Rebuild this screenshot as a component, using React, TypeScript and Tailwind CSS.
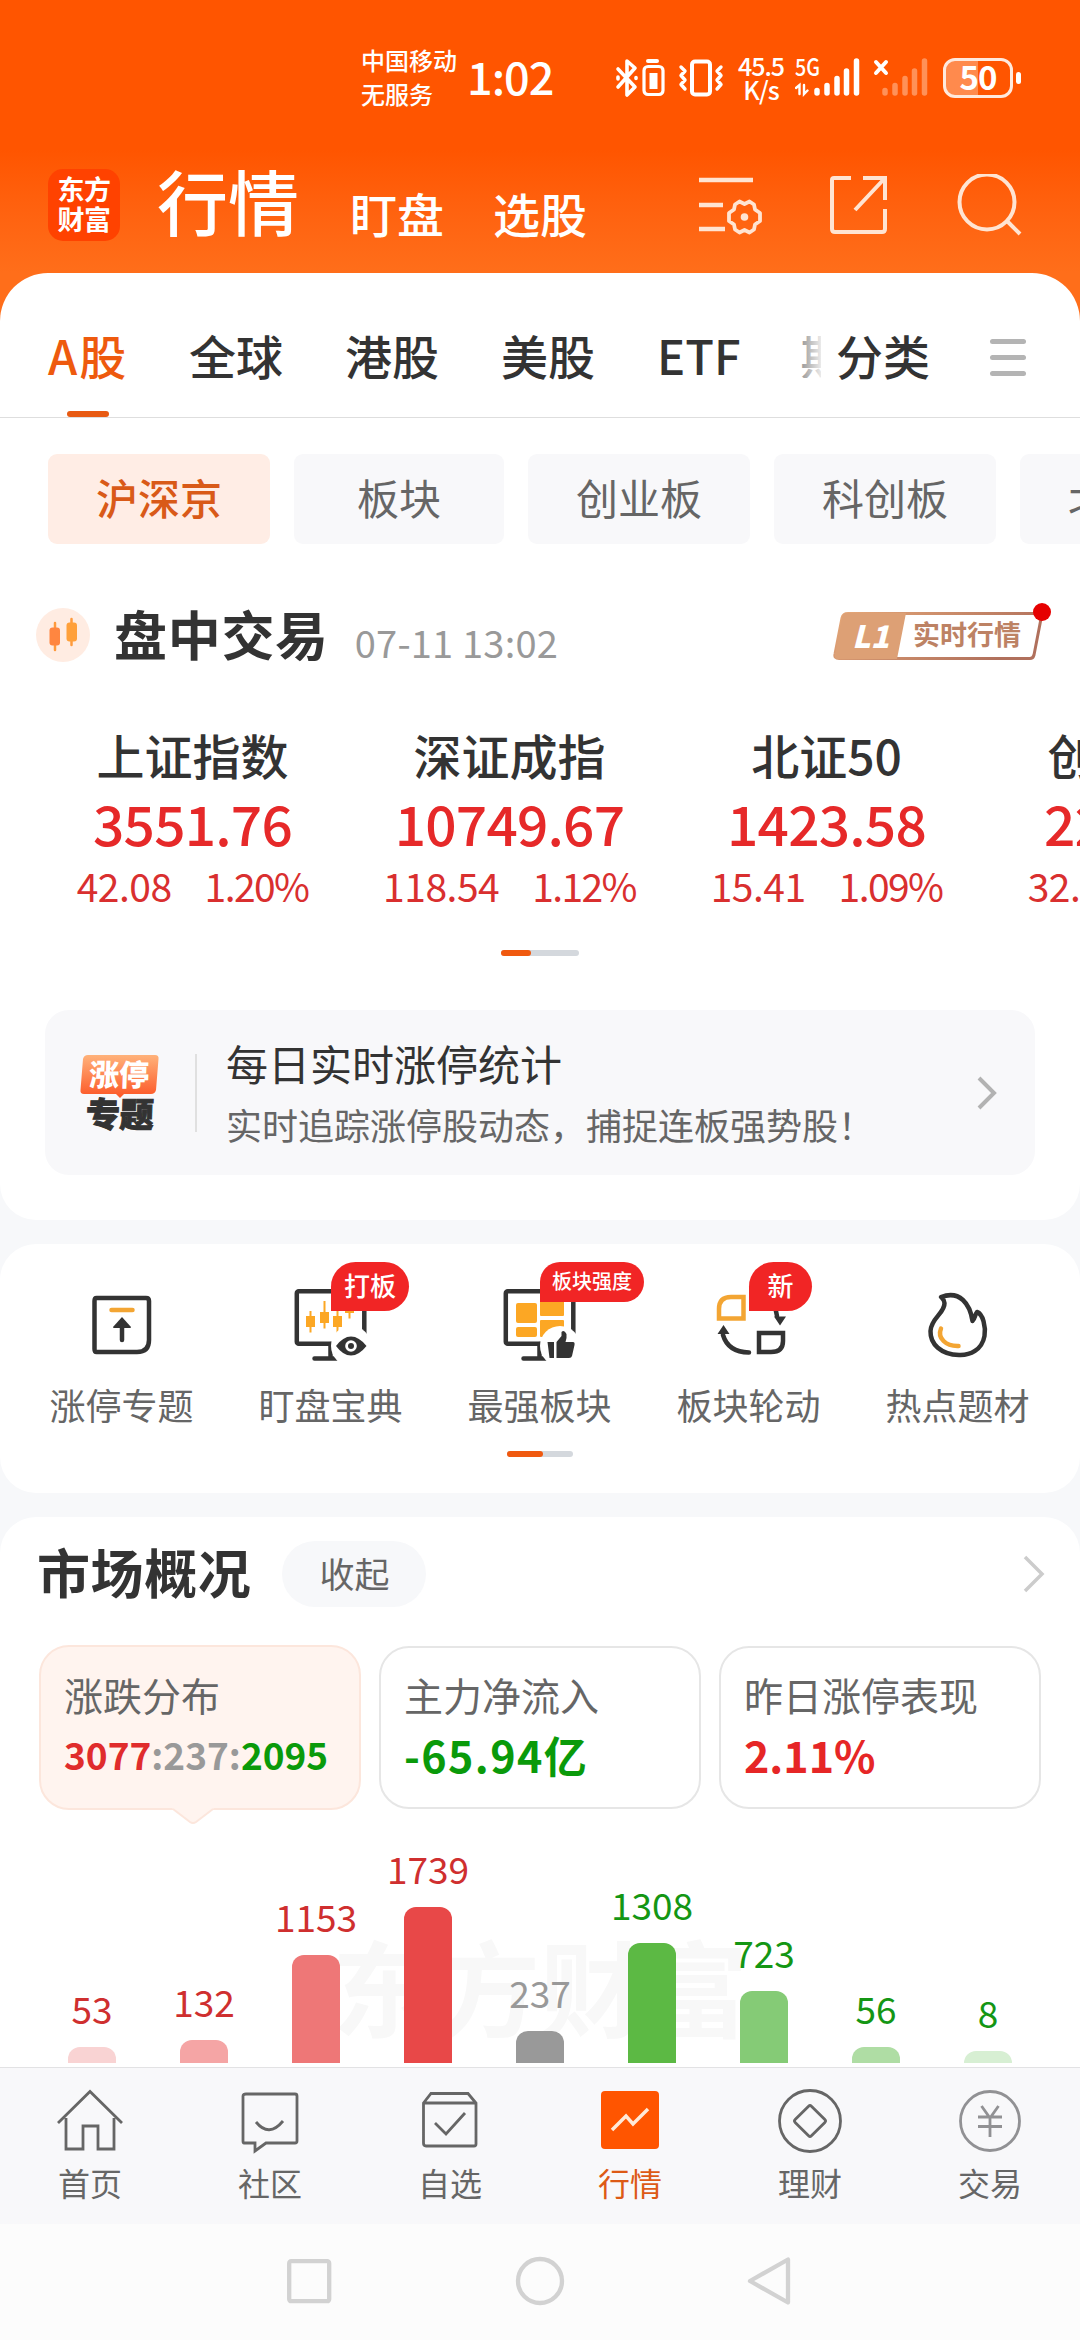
import type { ReactNode } from "react"

const markets = ["全球", "港股", "美股", "ETF"]

const boards = [
  { name: "沪深京", width: "w-[222px]", active: true },
  { name: "板块", width: "w-[210px]" },
  { name: "创业板", width: "w-[222px]" },
  { name: "科创板", width: "w-[222px]" },
  { name: "北交所", width: "w-[222px]" },
]

const indices = [
  { name: "上证指数", value: "3551.76", change: "42.08", percent: "1.20%" },
  { name: "深证成指", value: "10749.67", change: "118.54", percent: "1.12%" },
  { name: "北证50", value: "1423.58", change: "15.41", percent: "1.09%" },
  { name: "创业板指", value: "2207.10", change: "32.93", percent: "1.51%" },
]

const distribution = [
  { count: 53, height: 16, bar: "bg-[#f9d3d3]", text: "text-[#cf2f2f]" },
  { count: 132, height: 23, bar: "bg-[#f5a5a5]", text: "text-[#cf2f2f]" },
  { count: 1153, height: 108, bar: "bg-[#ee7777]", text: "text-[#cf2f2f]" },
  { count: 1739, height: 156, bar: "bg-[#e84848]", text: "text-[#cf2f2f]" },
  { count: 237, height: 32, bar: "bg-[#999999]", text: "text-[#999999]" },
  { count: 1308, height: 120, bar: "bg-[#5cb944]", text: "text-[#149614]" },
  { count: 723, height: 72, bar: "bg-[#85cb76]", text: "text-[#149614]" },
  { count: 56, height: 16, bar: "bg-[#afdda4]", text: "text-[#149614]" },
  { count: 8, height: 12, bar: "bg-[#d7efd3]", text: "text-[#149614]" },
]

function StatusBar() {
  return (
    <div className="flex h-[156px] items-center pl-[361px] text-white">
      <div className="flex w-[106px] flex-col gap-[10px] pb-[2px] text-[24px] leading-none font-medium whitespace-nowrap">
        <span>中国移动</span>
        <span>无服务</span>
      </div>
      <div className="w-[148px] pb-[5px] text-[45px] leading-none font-medium tracking-[-1px]">1:02</div>
      <svg className="h-[42px] w-[112px]" viewBox="0 0 112 42" fill="none" stroke="white" strokeWidth="3.6" strokeLinecap="round" strokeLinejoin="round">
        {/* bluetooth + device battery */}
        <path d="M3 12 L20 30 L12 38 V4 L20 11 L3 30" />
        <path d="M3 20 V22 M21 20.500 V21.500" />
        <path d="M33 4 H42" strokeWidth="4" />
        <rect x="29" y="9.500" width="19" height="28" rx="4" strokeWidth="3.200" />
        <rect x="34.500" y="16" width="8" height="16" fill="white" stroke="none" />
        {/* vibrate */}
        <rect x="77" y="4.500" width="18" height="33" rx="3" strokeWidth="4" />
        <path d="M66 10 L70 14 L66 18.500 L70 23 L66 27.500 L70 32 M106 10 L102 14 L106 18.500 L102 23 L106 27.500 L102 32" strokeWidth="3.400" />
      </svg>
      <div className="ml-[8px] flex w-[52px] flex-col items-center pb-[2px] text-[25px] leading-[24px] font-medium tracking-[-1px]">
        <span>45.5</span>
        <span>K/s</span>
      </div>
      <svg className="ml-[8px] h-[42px] w-[138px]" viewBox="2 0 138 42" fill="none" strokeLinecap="round">
        <text x="2" y="19" fontSize="24" fontWeight="500" fill="white" textLength="25" lengthAdjust="spacingAndGlyphs">5G</text>
        <path d="M3 31 L6.500 28 V37 M11 28 V37 L14.500 33.500" stroke="white" strokeWidth="2.400" />
        <path d="M24 33.500 V36 M34 28.500 V36 M44 21.500 V36 M53.500 14 V36 M63.500 4 V36" stroke="white" strokeWidth="5.500" />
        <path d="M83 5 L93 16 M93 5 L83 16" stroke="white" strokeWidth="4" />
        <path d="M92 33.500 V36 M102 28.500 V36 M112 21.500 V36 M121.500 14 V36 M131.500 4 V36" stroke="#ff9158" strokeWidth="5.500" />
      </svg>
      <div className="ml-[10px] flex h-[40px] w-[70px] items-center justify-center rounded-[12px] border-[3.5px] border-[#ffe9dd] bg-gradient-to-r from-[#ff8a4d] from-50% to-[#ff5500] to-50% pb-[3px] text-[33px] leading-none font-bold tracking-[-1px]">
        50
      </div>
      <div className="ml-[3px] h-[12px] w-[5px] rounded-full bg-white" />
    </div>
  )
}

function Header() {
  return (
    <header className="h-[321px] bg-gradient-to-b from-[#ff5500] from-[150px] to-[#ff6e1a] to-[273px]">
      <StatusBar />
      <div className="flex h-[98px] items-center pl-[48px] whitespace-nowrap text-white">
        <div className="flex size-[72px] flex-col items-center justify-center rounded-[15px] bg-[#ff4200] pb-[3px] text-[27px] leading-[30px] font-bold tracking-[-0.5px]">
          <span>东方</span>
          <span>财富</span>
        </div>
        <div className="ml-[37px] w-[193px] pb-[11px] text-[71px] leading-none font-medium">行情</div>
        <div className="w-[143px] pt-[15px] text-[47px] leading-none font-medium">盯盘</div>
        <div className="w-[206px] pt-[15px] text-[47px] leading-none font-medium">选股</div>
        <svg className="h-[62px] w-[324px]" viewBox="0 0 324 62" fill="none" stroke="#ffe4d2" strokeWidth="4">
          {/* list settings */}
          <path d="M0 6 H54 M0 31 H24 M0 55 H26" strokeWidth="4.500" />
          <path d="M40.500 27.500 L45.500 30 L50.500 27.500 L55 30.500 L56 35.500 L61 39 V47 L56 50.500 L55 55.500 L50.500 58.500 L45.500 56 L40.500 58.500 L36 55.500 L35 50.500 L30 47 V39 L35 35.500 L36 30.500 Z" strokeLinejoin="round" strokeWidth="3.800" />
          <circle cx="45.500" cy="43" r="3.800" fill="#ffe4d2" stroke="none" />
          {/* open in new */}
          <path d="M152 4 H135 Q133 4 133 6 V55 Q133 58 136 58 H183 Q186 58 186 55 V35 M164 4 H186 V26 M186 4 L156 36" />
          {/* search */}
          <circle cx="288" cy="28" r="27.500" />
          <path d="M308 47 L321 60" />
        </svg>
      </div>
    </header>
  )
}

function MarketTabs() {
  return (
    <nav className="flex h-[145px] items-start border-b border-[#dedede] pt-[58px] pl-[48px] text-[47px] leading-none font-medium whitespace-nowrap text-[#333]">
      <div className="relative h-[86px] w-[79px] text-[#ee5a0e]">
        <span className="tracking-[2px]">A股</span>
        <span className="absolute bottom-0 left-[19px] h-[6px] w-[42px] rounded-[3px] bg-[#e85a12]" />
      </div>
      <div className="ml-[62px] flex gap-[62px]">
        {markets.map((name) => (
          <span key={name}>{name}</span>
        ))}
      </div>
      <div className="relative ml-[60px] w-[20px] overflow-hidden">
        <span>期</span>
        <span className="absolute inset-0 bg-gradient-to-r from-white/50 to-white/90" />
      </div>
      <span className="ml-auto">分类</span>
      <div className="mt-[8px] mr-[54px] ml-[60px] flex w-[36px] flex-col gap-[11px]">
        <span className="h-[5px] rounded-full bg-[#b4b4b4]" />
        <span className="h-[5px] rounded-full bg-[#b4b4b4]" />
        <span className="h-[5px] rounded-full bg-[#b4b4b4]" />
      </div>
    </nav>
  )
}

function BoardChips() {
  return (
    <div className="mt-[36px] flex gap-[24px] overflow-hidden pl-[48px] text-[42px] whitespace-nowrap">
      {boards.map((board) => (
        <div
          key={board.name}
          className={`flex h-[90px] shrink-0 items-center justify-center rounded-[9px] pb-[4px] leading-none ${board.width} ${
            board.active ? "bg-[#ffede5] font-medium text-[#d95a18]" : "bg-[#f8f8fa] text-[#666]"
          }`}
        >
          {board.name}
        </div>
      ))}
    </div>
  )
}

function SessionTitle() {
  return (
    <div className="mt-[56px] flex h-[70px] items-center pl-[36px] whitespace-nowrap">
      <svg className="size-[54px]" viewBox="0 0 54 54">
        <circle cx="27" cy="27" r="27" fill="#ffece2" />
        <path d="M19 15 V42 M35.500 11 V37" stroke="#ff9a3c" strokeWidth="2.500" strokeLinecap="round" />
        <rect x="13.500" y="19.500" width="10.500" height="18" rx="3" fill="#ff8640" />
        <rect x="30.500" y="14.500" width="10.500" height="19" rx="3" fill="#ffa03a" />
      </svg>
      <h2 className="ml-[24px] pb-[4px] text-[53px] leading-none font-bold tracking-[0.7px] text-[#333]">盘中交易</h2>
      <span className="ml-[26px] pt-[13px] text-[38px] leading-none tracking-[0.2px] text-[#999]">07-11 13:02</span>
      <svg className="ml-auto mr-[26px] h-[64px] w-[222px]" viewBox="0 0 222 64">
        <defs>
          <linearGradient id="level" x1="0" y1="0" x2="1" y2="0.300">
            <stop offset="0" stopColor="#e6a878" />
            <stop offset="1" stopColor="#b0705c" />
          </linearGradient>
        </defs>
        <path d="M16 10.500 H210 L202 52 Q201 55.500 198 55.500 H7 Q2 55.500 3 51 L10 15 Q11 10.500 16 10.500 Z" fill="white" stroke="url(#level)" strokeWidth="3" />
        <path d="M14 10 H74 L65 56 H6 Q2 56 3 51 L10 14 Q11 10 14 10 Z" fill="#dda075" />
        <text x="20" y="45" fontSize="31" fontWeight="900" fontStyle="italic" fill="white">L1</text>
        <text x="81" y="42" fontSize="27" fontWeight="700" fill="#bd8264">实时行情</text>
        <circle cx="210" cy="9" r="9" fill="#e60000" />
      </svg>
    </div>
  )
}

function PagerDots({ className, active }: { className: string; active: string }) {
  return (
    <div className={`mx-auto h-[6px] rounded-full bg-[#d4d8dd] ${className}`}>
      <div className={`h-[6px] rounded-full bg-[#f0590f] ${active}`} />
    </div>
  )
}

function IndexQuotes() {
  return (
    <div className="mt-[60px] flex h-[180px] overflow-hidden pl-[34px] whitespace-nowrap">
      {indices.map((item) => (
        <div key={item.name} className="flex w-[317px] shrink-0 flex-col items-center text-[#e62929]">
          <span className="text-[48px] leading-none font-medium text-[#333]">{item.name}</span>
          <span className="mt-[17px] text-[55px] leading-none font-medium tracking-[-0.8px]">{item.value}</span>
          <span className="mt-[16px] flex gap-[33px] text-[39px] leading-none tracking-[-0.5px] text-[#d92f2f]">
            <span>{item.change}</span>
            <span className="tracking-[-1.6px]">{item.percent}</span>
          </span>
        </div>
      ))}
    </div>
  )
}

function LimitUpBanner() {
  return (
    <div className="mx-[45px] mt-[54px] flex h-[165px] items-center rounded-[24px] bg-[#f8f8fa] pl-[34px] whitespace-nowrap">
      <svg className="h-[82px] w-[82px]" viewBox="0 0 82 82">
        <defs>
          <linearGradient id="limit" x1="0" y1="0" x2="0" y2="1">
            <stop offset="0" stopColor="#ffb27a" />
            <stop offset="1" stopColor="#fc5626" />
          </linearGradient>
        </defs>
        <path d="M9 3 H76 Q80 3 79.500 7 L77 38 Q76 42 72 42 H45 L41 46 L37 42 H5 Q1 42 1.500 38 L4 7 Q5 3 9 3 Z" fill="url(#limit)" />
        <text x="11" y="34" fontSize="30" fontWeight="900" fill="white" transform="skewX(-2)">涨停</text>
        <text x="9" y="75" fontSize="34" fontWeight="900" fill="#333" stroke="#333" strokeWidth="1" transform="skewX(-2)">专题</text>
      </svg>
      <div className="ml-[34px] h-[78px] w-[2px] bg-[#e0e0e0]" />
      <div className="ml-[29px] flex flex-col pt-[4px]">
        <span className="text-[42px] leading-none text-[#333]">每日实时涨停统计</span>
        <span className="mt-[22px] mb-[6px] text-[36px] leading-none text-[#666]">实时追踪涨停股动态，捕捉连板强势股！</span>
      </div>
      <svg className="ml-auto mr-[38px] h-[34px] w-[20px]" viewBox="0 0 20 34" fill="none" stroke="#b2b2b2" strokeWidth="4">
        <path d="M2 2 L17 17 L2 32" />
      </svg>
    </div>
  )
}

const iconBox = "h-[84px] w-[96px]"

function LimitUpIcon() {
  return (
    <svg className={iconBox} viewBox="0 0 96 84" fill="none" stroke="#333" strokeWidth="4.500">
      <path d="M22.500 14 H72 Q75 14 75 17 V56 Q75 68 63 68 H22.500 Q20.500 68 20.500 65 V17 Q20.500 14 22.500 14 Z" />
      <path d="M37.500 26 H58.500" stroke="#f3a533" strokeLinecap="round" />
      <path d="M48 40 V56" strokeLinecap="round" />
      <path d="M48 33 L57 43 Q57 44 56 44 H40 Q39 44 39 43 Z" fill="#333" stroke="none" />
    </svg>
  )
}

function MonitorFrame({ children }: { children: ReactNode }) {
  return (
    <svg className={iconBox} viewBox="0 0 96 84" fill="none">
      <rect x="13.800" y="7.300" width="67.500" height="52.500" rx="2" stroke="#333" strokeWidth="4.500" />
      <path d="M31.500 74.500 H56 M47.500 60 V74" stroke="#333" strokeWidth="4.500" strokeLinecap="round" />
      {children}
    </svg>
  )
}

function WatchIcon() {
  return (
    <MonitorFrame>
      <path d="M27.500 27 V48.500 M41.500 17 V44.500 M54.500 24 V49.500 M66.500 20 V34.500" stroke="#fca724" strokeWidth="2" />
      <path d="M23 32 H32 V43 H23 Z M37 28 H46 V39 H37 Z M50 32 H59 V43 H50 Z M62 20 H71 V29 H62 Z" fill="#fca724" />
      <circle cx="68" cy="62" r="20" fill="white" />
      <path d="M53 62 Q60 52.500 68 52.500 Q76 52.500 83.500 62 Q76 71.500 68 71.500 Q60 71.500 53 62 Z" fill="#333" />
      <circle cx="68" cy="62" r="5.800" fill="white" />
      <circle cx="68" cy="62" r="3" fill="#333" />
    </MonitorFrame>
  )
}

function StrongestIcon() {
  return (
    <MonitorFrame>
      <rect x="24" y="19" width="21" height="20" rx="2" fill="#fca724" />
      <rect x="24" y="43" width="21" height="10" rx="2" fill="#fca724" />
      <rect x="48" y="17" width="24" height="15" rx="1" fill="#fca724" />
      <rect x="48" y="36" width="24" height="17" rx="1" fill="#fca724" />
      <circle cx="68" cy="62" r="20" fill="white" />
      <path d="M55.500 58 H62 V74 H57.500 Z M64.500 58 L69.500 52 V48 Q72 45 74.500 50 Q75 54 73.500 58 H81 Q83 58 82.500 61 L80 72 Q79.500 74 77 74 H64.500 Z" fill="#333" />
    </MonitorFrame>
  )
}

function RotationIcon() {
  return (
    <svg className={iconBox} viewBox="0 0 96 84" fill="none" strokeWidth="4.500">
      <path d="M42.500 13 V34.500 H18 V25 Q18 13 30 13 Z" stroke="#f3a533" />
      <path d="M58 49 H82 V57 Q82 68 70 68 H58 Z" stroke="#333" />
      <path d="M22 51 Q27 68 48 68.500 M69 14 Q74 20 76 32" stroke="#333" strokeLinecap="round" />
      <path d="M22.500 41 L28.500 50 H16.500 Z M79 41.500 L85 32.500 H73 Z" fill="#333" />
    </svg>
  )
}

function FlameIcon() {
  return (
    <svg className={iconBox} viewBox="0 0 96 84" fill="none" strokeWidth="4.500" strokeLinejoin="round" strokeLinecap="round">
      <path d="M31 13 C50 6 60 20 62.500 37 C65 35 65 30 67 28 C73 30 76 43 74.500 52 C72 66 60 71.500 49 71 C31 70.500 20 60 20.500 47 C21 34 35 29 34.500 19 C34.500 16 33 15 31 13 Z" stroke="#333" />
      <path d="M31 44.500 C27 54 36 62.500 48.500 62" stroke="#f3a533" />
    </svg>
  )
}

const shortcuts = [
  { name: "涨停专题", icon: <LimitUpIcon /> },
  { name: "盯盘宝典", icon: <WatchIcon />, badge: "打板", badgeClass: "h-[49px] w-[78px] text-[26px]" },
  { name: "最强板块", icon: <StrongestIcon />, badge: "板块强度", badgeClass: "h-[40px] w-[104px] text-[20px]" },
  { name: "板块轮动", icon: <RotationIcon />, badge: "新", badgeClass: "h-[49px] w-[63px] text-[26px]" },
  { name: "热点题材", icon: <FlameIcon /> },
]

function Shortcuts() {
  return (
    <section className="mt-[24px] h-[249px] rounded-[36px] bg-white px-[17px] pt-[40px] whitespace-nowrap">
      <div className="flex">
        {shortcuts.map((item) => (
          <div key={item.name} className="relative flex w-[209px] flex-col items-center">
            {item.icon}
            {item.badge && (
              <span
                className={`absolute top-[-22px] left-[105px] flex items-center justify-center rounded-[25px] rounded-bl-none bg-[#f12525] pb-[3px] leading-none font-medium text-white ${item.badgeClass}`}
              >
                {item.badge}
              </span>
            )}
            <span className="mt-[18px] text-[36px] leading-none text-[#666]">{item.name}</span>
          </div>
        ))}
      </div>
      <PagerDots className="mt-[29px] w-[66px]" active="w-[36px]" />
    </section>
  )
}

function StatCard({ label, children }: { label: string; children: ReactNode }) {
  return (
    <div className="mt-px h-[163px] w-[322px] rounded-[30px] border-2 border-[#e6e6e6] pt-[27px] pl-[23px]">
      <div className="text-[39px] leading-none text-[#666]">{label}</div>
      <div className="mt-[14px] text-[43px] leading-[52px] font-bold">{children}</div>
    </div>
  )
}

function Distribution() {
  return (
    <div className="relative mt-[37px] h-[219px]">
      <div className="absolute inset-x-0 top-[86px] text-center text-[104px] leading-none font-bold text-[#f8f8f8]">东方财富</div>
      <div className="relative flex h-[216px] items-end pl-[36px]">
        {distribution.map((item) => (
          <div key={item.count} className="flex w-[112px] flex-col items-center gap-[20px]">
            <span className={`text-[37px] leading-none ${item.text}`}>{item.count}</span>
            <span className={`w-[48px] rounded-t-[12px] ${item.bar}`} style={{ height: item.height }} />
          </div>
        ))}
      </div>
    </div>
  )
}

function MarketOverview() {
  return (
    <section className="mt-[24px] h-[550px] rounded-t-[36px] bg-white pt-[24px] whitespace-nowrap">
      <div className="flex h-[66px] items-center pl-[37px]">
        <h2 className="pb-[5px] text-[53px] leading-none font-bold tracking-[0.6px] text-[#333]">市场概况</h2>
        <span className="ml-[31px] flex h-[66px] w-[144px] items-center justify-center rounded-full bg-[#f7f8fa] pb-[3px] text-[35px] leading-none text-[#666]">
          收起
        </span>
        <svg className="ml-auto mr-[34px] h-[38px] w-[23px]" viewBox="0 0 23 38" fill="none" stroke="#ccc" strokeWidth="3.500">
          <path d="M2 2 L19 19 L2 36" />
        </svg>
      </div>
      <div className="mt-[38px] flex gap-[18px] pl-[39px]">
        <div className="relative h-[165px] w-[322px] rounded-[30px] border-2 border-[#fce6dc] bg-[#fff4ef] pt-[28px] pl-[23px]">
          <div className="text-[39px] leading-none text-[#666]">涨跌分布</div>
          <div className="mt-[15px] text-[37px] leading-[50px] font-bold">
            <span className="text-[#e02c2c]">3077</span>
            <span className="text-[#999]">:237:</span>
            <span className="text-[#0a9a0a]">2095</span>
          </div>
          <svg className="absolute top-[161px] left-[131px] h-[18px] w-[42px]" viewBox="0 0 42 18">
            <path d="M0 0 H42 L24 14 Q21 16 18 14 Z" fill="#fff4ef" />
            <path d="M1 1 L18 14 Q21 16 24 14 L41 1" fill="none" stroke="#fce6dc" strokeWidth="2" />
          </svg>
        </div>
        <StatCard label="主力净流入">
          <span className="tracking-[1.4px] text-[#0a9a0a]">-65.94亿</span>
        </StatCard>
        <StatCard label="昨日涨停表现">
          <span className="text-[#e62626]">2.11%</span>
        </StatCard>
      </div>
      <Distribution />
    </section>
  )
}

const navItems = [
  {
    name: "首页",
    icon: <path d="M4 28 L36 -3.500 L68 28 M12 23 V54 H29 V31 H44 V54 H60 V23" transform="translate(0 6)" />,
  },
  {
    name: "社区",
    icon: <path d="M12 5 H61 Q63 5 63 7 V52 Q63 54 61 54 H32 L21 62 V54 H10 Q9 54 9 52 V7 Q9 5 12 5 Z M22 33 Q35 49 49 32" />,
  },
  {
    name: "自选",
    icon: <path d="M9.500 14 L17 4.500 H54 L62 14 V55 Q62 57 60 57 H12 Q9.500 57 9.500 54 Z M9.500 14 H62 M21 34 L32 45 L51 24" />,
  },
  {
    name: "行情",
    active: true,
    icon: (
      <>
        <rect x="7" y="2" width="58" height="58" rx="4" fill="#ff5500" stroke="none" />
        <path d="M18 41 L32 27 L39 35 L54 20" stroke="#ffe9d8" strokeWidth="3.500" />
      </>
    ),
  },
  {
    name: "理财",
    icon: (
      <>
        <circle cx="36" cy="32" r="30.500" />
        <rect x="24.500" y="20.500" width="23" height="23" rx="2" transform="rotate(45 36 32)" />
      </>
    ),
  },
  {
    name: "交易",
    icon: (
      <>
        <circle cx="36" cy="32" r="29.500" stroke="#919194" />
        <path d="M27.500 17 L36 29 L44.500 17 M24 28 H48 M24 37.500 H48 M36 28 V48" stroke="#919194" />
      </>
    ),
  },
]

function BottomNav() {
  return (
    <nav className="flex h-[157px] border-t border-[#e2e2e4] bg-[#f8f8fa] pt-[21px]">
      {navItems.map((item) => (
        <div key={item.name} className={`flex w-[180px] flex-col items-center ${item.active ? "text-[#dd5a16]" : "text-[#666]"}`}>
          <svg className="h-[66px] w-[72px]" viewBox="0 0 72 66" fill="none" stroke="#666" strokeWidth="2.800">
            {item.icon}
          </svg>
          <span className="mt-[11px] text-[32px] leading-none">{item.name}</span>
        </div>
      ))}
    </nav>
  )
}

function SystemNav() {
  return (
    <div className="flex h-[116px] items-center justify-center bg-[#fcfcfc]">
      <svg className="h-[52px] w-[510px]" viewBox="0 0 510 52" fill="none" stroke="#d2d2d2" strokeWidth="4.300" strokeLinejoin="round">
        <rect x="4.200" y="5.200" width="40" height="40" rx="2" />
        <circle cx="255" cy="25" r="22" />
        <path d="M503 3.500 V46.500 L465 25 Z" />
      </svg>
    </div>
  )
}

export default function App() {
  return (
    <div className="flex h-[2340px] w-[1080px] flex-col overflow-hidden bg-[#f7f8fa] font-['Noto_Sans_CJK_SC',sans-serif]">
      <Header />
      <section className="-mt-12 h-[947px] rounded-t-[48px] rounded-b-[36px] bg-white">
        <MarketTabs />
        <BoardChips />
        <SessionTitle />
        <IndexQuotes />
        <PagerDots className="mt-[40px] w-[78px]" active="w-[30px]" />
        <LimitUpBanner />
      </section>
      <Shortcuts />
      <MarketOverview />
      <BottomNav />
      <SystemNav />
    </div>
  )
}
